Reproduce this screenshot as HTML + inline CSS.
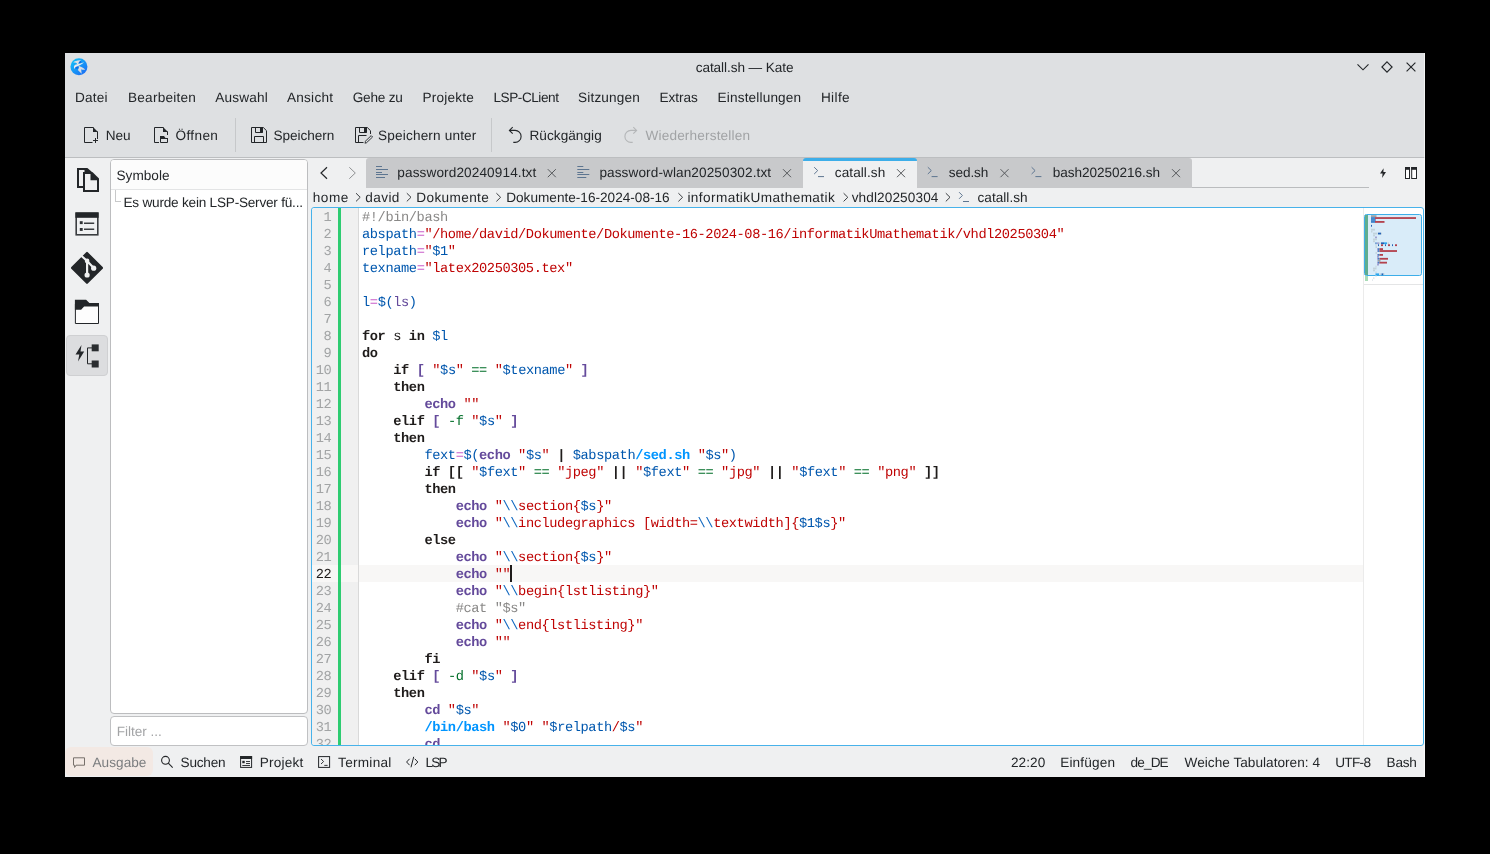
<!DOCTYPE html>
<html lang="de">
<head>
<meta charset="utf-8">
<title>catall.sh — Kate</title>
<style>
*{box-sizing:border-box}
html,body{margin:0;padding:0;width:1490px;height:854px;background:#000;overflow:hidden}
body{position:relative;font-family:"Liberation Sans",sans-serif;font-size:13.6px;color:#232629}
.abs{position:absolute}
.t{position:absolute;white-space:pre;line-height:20px;height:20px;text-rendering:geometricPrecision}
svg{position:absolute;overflow:visible}
/* window */
#win{position:absolute;left:65px;top:53px;width:1360px;height:724px;background:#eff0f1}
#head{position:absolute;left:0;top:0;width:1360px;height:104px;background:#dee0e2}
#headline{position:absolute;left:0;top:104px;width:1360px;height:1px;background:#bcbec0}
/* editor */
#edframe{position:absolute;left:311px;top:207px;width:1113px;height:539px;border:1px solid #47b2ea;border-radius:3px;background:#fff}
#lnbg{position:absolute;left:312px;top:208px;width:26px;height:537px;background:#f0f0f0;border-radius:3px 0 0 3px}
#green{position:absolute;left:338px;top:208px;width:3px;height:537px;background:#2ecc71}
#fold{position:absolute;left:341px;top:208px;width:18px;height:537px;background:#f0f0f0}
#curline{position:absolute;left:312px;top:565px;width:1051px;height:17px;background:#f8f7f6}
#clip{position:absolute;left:312px;top:208px;width:1111px;height:537px;overflow:hidden}
.ln{position:absolute;left:0;width:19.4px;text-align:right;font-family:"Liberation Mono",monospace;font-size:13.7px;text-rendering:geometricPrecision;letter-spacing:-0.4114px;line-height:17px;height:17px;color:#a2a4a5;white-space:pre;padding-top:1.85px}
.ln.cur{color:#1f1c1b}
.cl{position:absolute;left:50px;font-family:"Liberation Mono",monospace;font-size:13.7px;text-rendering:geometricPrecision;letter-spacing:-0.4114px;line-height:17px;height:17px;color:#1f1c1b;white-space:pre;padding-top:1.85px}
.c{color:#898887}.v{color:#0057ae}.o{color:#ca60ca}.s{color:#bf0303}
.k{font-weight:bold;color:#1f1c1b}.b{font-weight:bold;color:#644a9b}.B{color:#644a9b;font-weight:bold}
.p{color:#644a9b}.e{color:#1068c0}.g{color:#006e28}.m{font-weight:bold;color:#0095ff}
</style>
</head>
<body>
<div id="win">
  <div id="head"></div>
  <div id="headline"></div>
  <div style="position:absolute;left:1359px;top:0;width:1px;height:724px;background:rgba(255,255,255,.6)"></div>
</div>


<!-- symbol panel -->
<div class="abs" style="left:110px;top:159px;width:198px;height:555px;background:#fff;border:1px solid #bcbdbf;border-radius:4px"></div>
<div class="abs" style="left:111px;top:189px;width:196px;height:1px;background:#e3e4e5"></div>
<div class="abs" style="left:111px;top:160px;width:196px;height:29px;background:#fcfcfc;border-radius:3px 3px 0 0"></div>
<div class="abs" style="left:115px;top:190px;width:6px;height:12px;border-left:1px solid #c8c9ca;border-bottom:1px solid #c8c9ca"></div>
<!-- filter -->
<div class="abs" style="left:110px;top:716px;width:198px;height:30px;background:#fff;border:1px solid #c0c1c3;border-radius:4px"></div>
<!-- sidebar active button -->
<div class="abs" style="left:66px;top:335px;width:42px;height:41px;background:#dcdddf;border:1px solid #cfd0d2;border-radius:4px"></div>
<!-- Ausgabe button -->
<div class="abs" style="left:65px;top:747px;width:88px;height:29px;background:#f3e9e4;border-radius:6px"></div>
<!-- tab bar -->
<div class="abs" style="left:366px;top:158px;width:826px;height:30px;background:#c8c9cb;border-radius:3px 3px 0 0"></div>

<div class="abs" style="left:1192px;top:187px;width:177px;height:1px;background:#babcbe"></div>
<div class="abs" style="left:803px;top:158px;width:114px;height:30px;background:#eff0f1;border-top:3px solid #3daee9;border-radius:3px 3px 0 0"></div>

<div id="edframe"></div>
<div id="lnbg"></div><div id="fold"></div><div id="curline"></div><div id="green"></div><div class="abs" style="left:358px;top:208px;width:1px;height:537px;background:#d9d9d9"></div>
<!-- minimap -->
<div class="abs" style="left:1363px;top:208px;width:1px;height:537px;background:#ebebeb"></div>
<div class="abs" style="left:1364px;top:284px;width:59px;height:1px;background:#e4e5e6"></div>
<div class="abs" id="mmview" style="left:1364px;top:214px;width:58px;height:62px;background:#d9ecf9;border:1px solid #3daee9;border-radius:2.5px"></div>
<div class="abs" style="left:1365px;top:215px;width:3px;height:60px;background:#5fad8f"></div>
<div class="abs" style="left:1365px;top:276px;width:3px;height:5px;background:#a9dcb6"></div>
<div class="abs" style="left:510px;top:565px;width:2px;height:17px;background:#1f1c1b"></div>
<!-- MMSVG --><svg width="1490" height="854" viewBox="0 0 1490 854" style="left:0;top:0">
<rect x="1371.0" y="215.20" width="5.5" height="1.8" fill="#9aa1a8"/>
<rect x="1371.0" y="217.14" width="4.0" height="1.8" fill="#3b80c9"/>
<rect x="1375.0" y="217.14" width="41.0" height="1.8" fill="#b3414d"/>
<rect x="1371.0" y="219.08" width="4.0" height="1.8" fill="#3b80c9"/>
<rect x="1375.0" y="219.08" width="1.0" height="1.8" fill="#7f86b9"/>
<rect x="1371.0" y="221.02" width="4.0" height="1.8" fill="#3b80c9"/>
<rect x="1375.0" y="221.02" width="9.5" height="1.8" fill="#b3414d"/>
<rect x="1371.0" y="224.90" width="1.0" height="1.8" fill="#2462b4"/>
<rect x="1371.0" y="228.78" width="4.0" height="1.8" fill="#c3d3db"/>
<rect x="1371.0" y="230.72" width="1.5" height="1.8" fill="#c3d3db"/>
<rect x="1373.0" y="232.66" width="4.5" height="1.8" fill="#c3d3db"/>
<rect x="1378.0" y="232.66" width="3.0" height="1.8" fill="#2462b4"/>
<rect x="1381.0" y="232.66" width="1.0" height="1.8" fill="#c3d3db"/>
<rect x="1373.0" y="234.60" width="2.0" height="1.8" fill="#c3d3db"/>
<rect x="1375.5" y="236.54" width="1.0" height="1.8" fill="#6b5aa9"/>
<rect x="1373.0" y="238.48" width="4.0" height="1.8" fill="#c3d3db"/>
<rect x="1373.0" y="240.42" width="2.0" height="1.8" fill="#c3d3db"/>
<rect x="1375.5" y="242.36" width="1.0" height="1.8" fill="#2462b4"/>
<rect x="1377.5" y="242.36" width="1.0" height="1.8" fill="#6b5aa9"/>
<rect x="1379.0" y="242.36" width="1.5" height="1.8" fill="#c3d3db"/>
<rect x="1381.0" y="242.36" width="3.0" height="1.8" fill="#2462b4"/>
<rect x="1384.0" y="242.36" width="3.0" height="1.8" fill="#2ea6ee"/>
<rect x="1387.5" y="242.36" width="1.5" height="1.8" fill="#c3d3db"/>
<rect x="1375.5" y="244.30" width="1.0" height="1.8" fill="#c3d3db"/>
<rect x="1378.0" y="244.30" width="1.0" height="1.8" fill="#2462b4"/>
<rect x="1381.0" y="244.30" width="2.0" height="1.8" fill="#b3414d"/>
<rect x="1385.0" y="244.30" width="1.0" height="1.8" fill="#2462b4"/>
<rect x="1388.0" y="244.30" width="2.0" height="1.8" fill="#b3414d"/>
<rect x="1392.0" y="244.30" width="1.0" height="1.8" fill="#2462b4"/>
<rect x="1395.0" y="244.30" width="2.0" height="1.8" fill="#b3414d"/>
<rect x="1375.5" y="246.24" width="1.5" height="1.8" fill="#c3d3db"/>
<rect x="1377.5" y="248.18" width="0.5" height="1.8" fill="#6b5aa9"/>
<rect x="1378.0" y="248.18" width="1.5" height="1.8" fill="#3b80c9"/>
<rect x="1379.5" y="248.18" width="3.5" height="1.8" fill="#b3414d"/>
<rect x="1377.5" y="250.12" width="0.5" height="1.8" fill="#6b5aa9"/>
<rect x="1378.0" y="250.12" width="1.5" height="1.8" fill="#3b80c9"/>
<rect x="1379.5" y="250.12" width="17.5" height="1.8" fill="#b3414d"/>
<rect x="1375.5" y="252.06" width="1.5" height="1.8" fill="#c3d3db"/>
<rect x="1377.5" y="254.00" width="0.5" height="1.8" fill="#6b5aa9"/>
<rect x="1378.0" y="254.00" width="1.5" height="1.8" fill="#3b80c9"/>
<rect x="1379.5" y="254.00" width="3.5" height="1.8" fill="#b3414d"/>
<rect x="1377.5" y="255.94" width="1.0" height="1.8" fill="#6b5aa9"/>
<rect x="1377.5" y="257.88" width="0.5" height="1.8" fill="#6b5aa9"/>
<rect x="1378.0" y="257.88" width="1.5" height="1.8" fill="#3b80c9"/>
<rect x="1379.5" y="257.88" width="8.5" height="1.8" fill="#b3414d"/>
<rect x="1377.5" y="259.82" width="3.0" height="1.8" fill="#9aa1a8"/>
<rect x="1377.5" y="261.76" width="0.5" height="1.8" fill="#6b5aa9"/>
<rect x="1378.0" y="261.76" width="1.5" height="1.8" fill="#3b80c9"/>
<rect x="1379.5" y="261.76" width="7.5" height="1.8" fill="#b3414d"/>
<rect x="1377.5" y="263.70" width="1.0" height="1.8" fill="#6b5aa9"/>
<rect x="1375.5" y="265.64" width="1.0" height="1.8" fill="#c3d3db"/>
<rect x="1373.0" y="267.58" width="3.5" height="1.8" fill="#c3d3db"/>
<rect x="1373.0" y="269.52" width="2.0" height="1.8" fill="#c3d3db"/>
<rect x="1375.5" y="271.46" width="1.0" height="1.8" fill="#c3d3db"/>
<rect x="1375.5" y="273.40" width="3.5" height="1.8" fill="#2ea6ee"/>
<rect x="1379.5" y="273.40" width="1.5" height="1.8" fill="#c3d3db"/>
<rect x="1381.5" y="273.40" width="2.0" height="1.8" fill="#2462b4"/>
<rect x="1383.5" y="273.40" width="1.0" height="1.8" fill="#c3d3db"/>
<rect x="1375.5" y="275.34" width="1.0" height="1.8" fill="#dfe6ea"/>
<rect x="1373.0" y="277.28" width="1.5" height="1.8" fill="#e3e8ec"/>
<rect x="1372.0" y="279.22" width="1.0" height="1.8" fill="#e3e8ec"/>
</svg><!-- /MMSVG -->
<!-- MMCONTENT -->
<div id="clip" style="will-change:transform">
<div style="position:absolute;left:0;top:-208px;width:1111px;height:745px">
<div class="ln" style="top:208px">1</div>
<div class="cl" style="top:208px"><span class="c">#!/bin/bash</span></div>
<div class="ln" style="top:225px">2</div>
<div class="cl" style="top:225px"><span class="v">abspath</span><span class="o">=</span><span class="s">&quot;/home/david/Dokumente/Dokumente-16-2024-08-16/informatikUmathematik/vhdl20250304&quot;</span></div>
<div class="ln" style="top:242px">3</div>
<div class="cl" style="top:242px"><span class="v">relpath</span><span class="o">=</span><span class="s">&quot;</span><span class="v">$1</span><span class="s">&quot;</span></div>
<div class="ln" style="top:259px">4</div>
<div class="cl" style="top:259px"><span class="v">texname</span><span class="o">=</span><span class="s">&quot;latex20250305.tex&quot;</span></div>
<div class="ln" style="top:276px">5</div>
<div class="cl" style="top:276px"></div>
<div class="ln" style="top:293px">6</div>
<div class="cl" style="top:293px"><span class="v">l</span><span class="o">=</span><span class="v">$(</span><span class="p">ls</span><span class="v">)</span></div>
<div class="ln" style="top:310px">7</div>
<div class="cl" style="top:310px"></div>
<div class="ln" style="top:327px">8</div>
<div class="cl" style="top:327px"><span class="k">for</span> s <span class="k">in</span> <span class="v">$l</span></div>
<div class="ln" style="top:344px">9</div>
<div class="cl" style="top:344px"><span class="k">do</span></div>
<div class="ln" style="top:361px">10</div>
<div class="cl" style="top:361px">    <span class="k">if</span> <span class="B">[</span> <span class="s">&quot;</span><span class="v">$s</span><span class="s">&quot;</span> <span class="g">==</span> <span class="s">&quot;</span><span class="v">$texname</span><span class="s">&quot;</span> <span class="B">]</span></div>
<div class="ln" style="top:378px">11</div>
<div class="cl" style="top:378px">    <span class="k">then</span></div>
<div class="ln" style="top:395px">12</div>
<div class="cl" style="top:395px">        <span class="b">echo</span> <span class="s">&quot;&quot;</span></div>
<div class="ln" style="top:412px">13</div>
<div class="cl" style="top:412px">    <span class="k">elif</span> <span class="B">[</span> <span class="g">-f</span> <span class="s">&quot;</span><span class="v">$s</span><span class="s">&quot;</span> <span class="B">]</span></div>
<div class="ln" style="top:429px">14</div>
<div class="cl" style="top:429px">    <span class="k">then</span></div>
<div class="ln" style="top:446px">15</div>
<div class="cl" style="top:446px">        <span class="v">fext</span><span class="o">=</span><span class="v">$(</span><span class="b">echo</span> <span class="s">&quot;</span><span class="v">$s</span><span class="s">&quot;</span> <span class="k">|</span> <span class="v">$abspath</span><span class="m">/sed.sh</span> <span class="s">&quot;</span><span class="v">$s</span><span class="s">&quot;</span><span class="v">)</span></div>
<div class="ln" style="top:463px">16</div>
<div class="cl" style="top:463px">        <span class="k">if</span> <span class="k">[[</span> <span class="s">&quot;</span><span class="v">$fext</span><span class="s">&quot;</span> <span class="g">==</span> <span class="s">&quot;jpeg&quot;</span> <span class="k">||</span> <span class="s">&quot;</span><span class="v">$fext</span><span class="s">&quot;</span> <span class="g">==</span> <span class="s">&quot;jpg&quot;</span> <span class="k">||</span> <span class="s">&quot;</span><span class="v">$fext</span><span class="s">&quot;</span> <span class="g">==</span> <span class="s">&quot;png&quot;</span> <span class="k">]]</span></div>
<div class="ln" style="top:480px">17</div>
<div class="cl" style="top:480px">        <span class="k">then</span></div>
<div class="ln" style="top:497px">18</div>
<div class="cl" style="top:497px">            <span class="b">echo</span> <span class="s">&quot;</span><span class="e">\\</span><span class="s">section{</span><span class="v">$s</span><span class="s">}&quot;</span></div>
<div class="ln" style="top:514px">19</div>
<div class="cl" style="top:514px">            <span class="b">echo</span> <span class="s">&quot;</span><span class="e">\\</span><span class="s">includegraphics [width=</span><span class="e">\\</span><span class="s">textwidth]{</span><span class="v">$1$s</span><span class="s">}&quot;</span></div>
<div class="ln" style="top:531px">20</div>
<div class="cl" style="top:531px">        <span class="k">else</span></div>
<div class="ln" style="top:548px">21</div>
<div class="cl" style="top:548px">            <span class="b">echo</span> <span class="s">&quot;</span><span class="e">\\</span><span class="s">section{</span><span class="v">$s</span><span class="s">}&quot;</span></div>
<div class="ln cur" style="top:565px">22</div>
<div class="cl" style="top:565px">            <span class="b">echo</span> <span class="s">&quot;&quot;</span></div>
<div class="ln" style="top:582px">23</div>
<div class="cl" style="top:582px">            <span class="b">echo</span> <span class="s">&quot;</span><span class="e">\\</span><span class="s">begin{lstlisting}&quot;</span></div>
<div class="ln" style="top:599px">24</div>
<div class="cl" style="top:599px">            <span class="c">#cat &quot;$s&quot;</span></div>
<div class="ln" style="top:616px">25</div>
<div class="cl" style="top:616px">            <span class="b">echo</span> <span class="s">&quot;</span><span class="e">\\</span><span class="s">end{lstlisting}&quot;</span></div>
<div class="ln" style="top:633px">26</div>
<div class="cl" style="top:633px">            <span class="b">echo</span> <span class="s">&quot;&quot;</span></div>
<div class="ln" style="top:650px">27</div>
<div class="cl" style="top:650px">        <span class="k">fi</span></div>
<div class="ln" style="top:667px">28</div>
<div class="cl" style="top:667px">    <span class="k">elif</span> <span class="B">[</span> <span class="g">-d</span> <span class="s">&quot;</span><span class="v">$s</span><span class="s">&quot;</span> <span class="B">]</span></div>
<div class="ln" style="top:684px">29</div>
<div class="cl" style="top:684px">    <span class="k">then</span></div>
<div class="ln" style="top:701px">30</div>
<div class="cl" style="top:701px">        <span class="b">cd</span> <span class="s">&quot;</span><span class="v">$s</span><span class="s">&quot;</span></div>
<div class="ln" style="top:718px">31</div>
<div class="cl" style="top:718px">        <span class="m">/bin/bash</span> <span class="s">&quot;</span><span class="v">$0</span><span class="s">&quot;</span> <span class="s">&quot;</span><span class="v">$relpath</span><span class="s">/</span><span class="v">$s</span><span class="s">&quot;</span></div>
<div class="ln" style="top:735px">32</div>
<div class="cl" style="top:735px">        <span class="b">cd</span></div>
</div>
</div>
<svg id="ico" width="1490" height="854" viewBox="0 0 1490 854" style="left:0;top:0" fill="none" stroke="#232629" stroke-width="1">
<!-- app icon -->
<defs><linearGradient id="kg" x1="0.15" y1="0.1" x2="0.85" y2="0.9"><stop offset="0" stop-color="#12bdf8"/><stop offset="1" stop-color="#1c70f4"/></linearGradient></defs>
<circle cx="78.95" cy="66.8" r="8.5" fill="url(#kg)" stroke="none"/>
<ellipse cx="79.9" cy="62" rx="1.5" ry="1" fill="#0b62e2" stroke="none"/>
<ellipse cx="76.9" cy="67.5" rx="1.9" ry="1.2" fill="#0b6ee8" stroke="none"/>
<path d="M73.3 62.5 C74.6 61.3 77.6 60.1 80.9 60.4 C79.7 60.9 79 61.6 78.7 62.4 C78.5 63 78.4 63.5 78.5 64.1 L76.7 64.3 C76.9 63.7 76.9 63.2 76.6 62.9 C75.6 62.6 74.4 62.5 73.3 62.5 Z" fill="#dfe2e6" stroke="none"/>
<path d="M84.1 62.2 C82 64.7 78.6 65.7 76.2 66.7 C75 67.3 74.6 68.3 74.8 69.3 C73.5 67.9 73.5 65.7 75.2 64.8 C77.6 63.6 81.4 63.7 84.1 62.2 Z" fill="#e9ebee" stroke="none"/>
<path d="M78.6 65.9 C80.6 66.3 83.2 67.7 85.2 69.5 C83.6 70.1 82.4 69.9 81.2 69.3 C81.2 70.6 81.5 72.3 81.7 73.7 C80.4 72.3 78.7 70.7 77.8 69.9 C78.8 68.8 79.2 67.2 78.6 65.9 Z" fill="#dadde1" stroke="none"/>
<!-- window buttons -->
<path d="M1357.5 64.3 L1363 69.8 L1368.5 64.3" stroke-width="1.15"/>
<path d="M1387 61.9 L1392.1 67 L1387 72.1 L1381.9 67 Z" stroke-width="1.15"/>
<path d="M1406.6 62.6 L1415.4 71.4 M1415.4 62.6 L1406.6 71.4" stroke-width="1.15"/>
<!-- toolbar separators -->
<path d="M235.5 118 V152 M491.5 118 V152" stroke="#c6c8ca"/>
<!-- Neu -->
<path d="M93.5 127.5 H84.5 V142.5 H92.5 M97.5 131.5 V139"/>
<path d="M93 127 L98 132 H93 Z" fill="#232629" stroke="none"/>
<path d="M93 140.5 H98 M95.5 138 V143"/>
<!-- Oeffnen -->
<path d="M163.5 127.5 H154.5 V142.5 H159 M167.5 131.5 V135"/>
<path d="M163 127 L168 132 H163 Z" fill="#232629" stroke="none"/>
<path d="M160.500 138.500 H167.500 V142.500 H160.500 Z"/>
<path d="M160 136 H164 L165.500 138 H168 V139 H160 Z" fill="#232629" stroke="none"/>
<!-- Speichern -->
<path d="M251.500 127.500 H263.300 L266.500 130.700 V142.500 H251.500 Z"/>
<path d="M255.500 127.500 V132.500 H262.500 V127.500"/>
<rect x="260" y="127" width="3" height="5.500" fill="#232629" stroke="none"/>
<path d="M254.500 142.500 V136.500 H263.500 V142.500"/>
<!-- Speichern unter -->
<path d="M363.500 142.500 H355.500 V127.500 H367.300 L370.500 130.700 V134"/>
<path d="M359.500 127.500 V132.500 H366.500 V127.500"/>
<rect x="364" y="127" width="3" height="5.500" fill="#232629" stroke="none"/>
<path d="M358.500 142.500 V135.500 H366.500"/>
<path d="M365.600 142.200 L364.800 143.100 L366.200 143 L372.600 137 L371.200 135.600 L364.900 141.700 Z" stroke-width=".9"/>
<!-- undo -->
<path d="M512.700 127.200 L509.400 130.400 L512.700 133.600 M509.400 130.400 H515.100 A6 6 0 0 1 515.100 142.400 H513.300" stroke-width="1.1"/>
<!-- redo (disabled) -->
<path d="M633.300 127.200 L636.600 130.400 L633.300 133.600 M636.600 130.400 H630.900 A6 6 0 0 0 630.900 142.400 H632.700" stroke="#b4b6b8" stroke-width="1.1"/>
<!-- tab nav chevrons -->
<path d="M327 167.300 L321 173 L327 178.700" stroke-width="1.2"/>
<path d="M349.300 167.300 L355.300 173 L349.300 178.700" stroke="#8d8f91" stroke-width="1"/>
<!-- text doc icons -->
<g stroke="#5d7590">
<path d="M376 166.500 H382 M376 169.500 H388 M376 172.500 H382 M376 174.500 H388 M376 177.500 H385"/>
<path d="M577.300 166.500 H583.300 M577.300 169.500 H589.300 M577.300 172.500 H583.300 M577.300 174.500 H589.300 M577.300 177.500 H586.300"/>
<!-- terminal icons -->
<path d="M814.200 167.200 L817.700 170.600 L814.200 174 M818 176.600 H824"/>
<path d="M927.800 167.200 L931.300 170.600 L927.800 174 M931.600 176.600 H937.600"/>
<path d="M1031.600 167.200 L1035.100 170.600 L1031.600 174 M1035.400 176.600 H1041.400"/>
<path d="M959.1 192.2 L962.4 195.5 L959.1 198.8 M963 201.5 H969"/>
</g>
<!-- tab close x -->
<g stroke="#55585b">
<path d="M547.800 169.200 L555.800 177.200 M555.800 169.200 L547.800 177.200"/>
<path d="M783 169.200 L791 177.200 M791 169.200 L783 177.200"/>
<path d="M897 169.200 L905 177.200 M905 169.200 L897 177.200"/>
<path d="M1000.500 169.200 L1008.500 177.200 M1008.500 169.200 L1000.500 177.200"/>
<path d="M1172 169.200 L1180 177.200 M1180 169.200 L1172 177.200"/>
</g>
<!-- breadcrumb separators -->
<g stroke="#3a3d40" stroke-width="1">
<path d="M356.0 193.2 L360.2 197.3 L356.0 201.4"/>
<path d="M406.8 193.2 L411.0 197.3 L406.8 201.4"/>
<path d="M496.4 193.2 L500.6 197.3 L496.4 201.4"/>
<path d="M678.4 193.2 L682.6 197.3 L678.4 201.4"/>
<path d="M843.6 193.2 L847.8 197.3 L843.6 201.4"/>
<path d="M945.8 193.2 L950.0 197.3 L945.8 201.4"/>
</g>
<!-- quick open + split -->
<path d="M1383.600 168.200 L1380 173.600 H1382.600 L1382.100 178 L1386 172 H1383.400 Z" fill="#232629" stroke="none"/>
<rect x="1405.500" y="167.500" width="4" height="11" fill="#fff"/>
<rect x="1411.700" y="167.500" width="4.800" height="11" fill="#fff"/>
<rect x="1405" y="167" width="5" height="2.800" fill="#232629" stroke="none"/>
<rect x="1411.200" y="167" width="5.800" height="2.800" fill="#232629" stroke="none"/>
<!-- sidebar: documents -->
<path d="M86 169 H78 V187 H83.500" stroke-width="2"/>
<path d="M84.500 168 H87.400 L92 172 H84.500 Z" fill="#232629" stroke="none"/>
<path d="M91 173 H84 V191 H98 V179.500" stroke-width="2"/>
<path d="M90.500 172 H92.400 L99 178.600 V180.200 H90.500 Z" fill="#232629" stroke="none"/>
<!-- sidebar: list -->
<rect x="76.200" y="213.200" width="21.600" height="21.600" stroke="#3a3d40" stroke-width="1.600"/>
<rect x="75.400" y="212.400" width="23.200" height="5.400" fill="#232629" stroke="none"/>
<rect x="79.800" y="221.200" width="2.900" height="2.900" fill="#2e3134" stroke="none"/>
<rect x="79.800" y="228" width="2.900" height="2.900" fill="#2e3134" stroke="none"/>
<path d="M84 223.200 H94.200 M84 229.200 H94.200" stroke="#3a3d40" stroke-width="1.500"/>
<!-- sidebar: git -->
<path d="M87 251.900 L103 267.900 L87 283.900 L71 267.900 Z" fill="#232629" stroke="#232629" stroke-width="2.400" stroke-linejoin="round" transform="translate(87 267.900) scale(.93) translate(-87 -267.900)"/>
<path d="M81.300 255.800 L87.100 261 V275 M87.100 261 L93.700 268.100" stroke="#eff0f1" stroke-width="2.200"/>
<circle cx="87.100" cy="260.900" r="2.300" fill="#eff0f1" stroke="none"/>
<circle cx="93.700" cy="268.200" r="2.600" fill="#eff0f1" stroke="none"/>
<circle cx="87.100" cy="275" r="2.600" fill="#eff0f1" stroke="none"/>
<!-- sidebar: folder -->
<rect x="75.400" y="304" width="23.100" height="19.500" fill="#fdfdfd" stroke="none"/>
<path d="M75.400 304 V323.500 H98.500 V304"/>
<path d="M74.900 299.800 H86.100 L89.400 303.100 H99 V306.600 H84.100 L81.100 309.800 H74.900 Z" fill="#232629" stroke="none"/>
<!-- sidebar: symbols -->
<path d="M81.500 345 L75.500 354.500 H79.300 L78 361.500 L84.200 351.500 H80.500 Z" fill="#232629" stroke="none"/>
<path d="M92 347.900 H87.500 V363.800 H92"/>
<rect x="91.700" y="344.400" width="7" height="6.900" fill="#2a2d30" stroke="none"/>
<rect x="91.700" y="360.500" width="7" height="7" fill="#2a2d30" stroke="none"/>
<!-- bottom bar icons -->
<path d="M73.500 757.800 H84.500 V765.200 H76 L74.600 767.400 V765.200 H73.500 Z" stroke="#77706b"/>
<circle cx="165.500" cy="760.300" r="3.900" stroke-width="1.100"/>
<path d="M168.300 763.200 L172.700 767.600" stroke-width="1.100"/>
<rect x="240.600" y="756.600" width="11" height="10.800"/>
<rect x="240.100" y="756.100" width="12" height="2.900" fill="#232629" stroke="none"/>
<rect x="242.300" y="760.800" width="2.400" height="2.400" fill="#232629" stroke="none"/>
<path d="M246 761.500 H250 M246 763.500 H250 M242.300 765.500 H250" stroke-width=".9"/>
<rect x="318.600" y="756.600" width="11" height="10.800"/>
<path d="M321 759 L323.600 761.500 L321 764 M324.300 765.400 H327.600" stroke-width=".9"/>
<path d="M409.600 758.800 L406.600 762 L409.600 765.200 M411 767.300 L413.700 756.800 M414.800 758.800 L417.800 762 L414.800 765.200"/>
</svg>

<div id="txt" style="position:absolute;left:0;top:0;width:1490px;height:854px;will-change:transform">
<span class="t" style="left:695.7px;top:57.9px;letter-spacing:-0.072px;">catall.sh — Kate</span>
<span class="t" style="left:75.0px;top:88.4px;letter-spacing:0.191px;">Datei</span>
<span class="t" style="left:128.0px;top:88.4px;letter-spacing:0.237px;">Bearbeiten</span>
<span class="t" style="left:215.2px;top:88.4px;letter-spacing:0.202px;">Auswahl</span>
<span class="t" style="left:286.9px;top:88.4px;letter-spacing:0.270px;">Ansicht</span>
<span class="t" style="left:352.7px;top:88.4px;letter-spacing:-0.215px;">Gehe zu</span>
<span class="t" style="left:422.6px;top:88.4px;letter-spacing:0.175px;">Projekte</span>
<span class="t" style="left:493.5px;top:88.4px;letter-spacing:-0.457px;">LSP-CLient</span>
<span class="t" style="left:578.1px;top:88.4px;letter-spacing:0.154px;">Sitzungen</span>
<span class="t" style="left:659.6px;top:88.4px;letter-spacing:-0.066px;">Extras</span>
<span class="t" style="left:717.6px;top:88.4px;letter-spacing:0.156px;">Einstellungen</span>
<span class="t" style="left:820.9px;top:88.4px;letter-spacing:0.399px;">Hilfe</span>
<span class="t" style="left:105.7px;top:126.1px;letter-spacing:-0.019px;">Neu</span>
<span class="t" style="left:175.5px;top:126.1px;letter-spacing:0.367px;">Öffnen</span>
<span class="t" style="left:273.5px;top:126.1px;letter-spacing:-0.040px;">Speichern</span>
<span class="t" style="left:378.1px;top:126.1px;letter-spacing:0.165px;">Speichern unter</span>
<span class="t" style="left:529.5px;top:126.1px;letter-spacing:0.045px;">Rückgängig</span>
<span class="t" style="left:645.5px;top:126.1px;letter-spacing:0.167px;color:#a1a3a5;">Wiederherstellen</span>
<span class="t" style="left:397.3px;top:163.3px;letter-spacing:0.116px;">password20240914.txt</span>
<span class="t" style="left:599.4px;top:163.3px;letter-spacing:0.101px;">password-wlan20250302.txt</span>
<span class="t" style="left:834.8px;top:163.3px;letter-spacing:0.066px;">catall.sh</span>
<span class="t" style="left:948.8px;top:163.3px;letter-spacing:-0.093px;">sed.sh</span>
<span class="t" style="left:1052.7px;top:163.3px;letter-spacing:-0.057px;">bash20250216.sh</span>
<span class="t" style="left:312.7px;top:187.8px;letter-spacing:0.561px;">home</span>
<span class="t" style="left:365.3px;top:187.8px;letter-spacing:0.400px;">david</span>
<span class="t" style="left:416.3px;top:187.8px;letter-spacing:0.373px;">Dokumente</span>
<span class="t" style="left:506.2px;top:187.8px;letter-spacing:0.012px;">Dokumente-16-2024-08-16</span>
<span class="t" style="left:687.4px;top:187.8px;letter-spacing:0.420px;">informatikUmathematik</span>
<span class="t" style="left:851.7px;top:187.8px;letter-spacing:0.116px;">vhdl20250304</span>
<span class="t" style="left:977.5px;top:187.8px;letter-spacing:0.028px;">catall.sh</span>
<span class="t" style="left:116.5px;top:165.6px;letter-spacing:0.018px;">Symbole</span>
<span class="t" style="left:123.5px;top:192.7px;letter-spacing:-0.219px;">Es wurde kein LSP-Server fü...</span>
<span class="t" style="left:116.7px;top:722.0px;letter-spacing:-0.036px;color:#a3a4a6;">Filter ...</span>
<span class="t" style="left:92.5px;top:753.1px;letter-spacing:0.038px;color:#7b7d7f;">Ausgabe</span>
<span class="t" style="left:180.6px;top:753.1px;letter-spacing:-0.222px;">Suchen</span>
<span class="t" style="left:259.8px;top:753.1px;letter-spacing:0.181px;">Projekt</span>
<span class="t" style="left:338.1px;top:753.1px;letter-spacing:0.261px;">Terminal</span>
<span class="t" style="left:425.4px;top:753.1px;letter-spacing:-1.752px;">LSP</span>
<span class="t" style="left:1010.9px;top:753.0px;letter-spacing:0.092px;">22:20</span>
<span class="t" style="left:1060.2px;top:753.0px;letter-spacing:0.161px;">Einfügen</span>
<span class="t" style="left:1130.5px;top:753.0px;letter-spacing:-0.845px;">de_DE</span>
<span class="t" style="left:1184.6px;top:753.0px;letter-spacing:0.031px;">Weiche Tabulatoren: 4</span>
<span class="t" style="left:1335.2px;top:753.0px;letter-spacing:-0.679px;">UTF-8</span>
<span class="t" style="left:1386.6px;top:753.0px;letter-spacing:-0.261px;">Bash</span>
</div>
</body>
</html>
